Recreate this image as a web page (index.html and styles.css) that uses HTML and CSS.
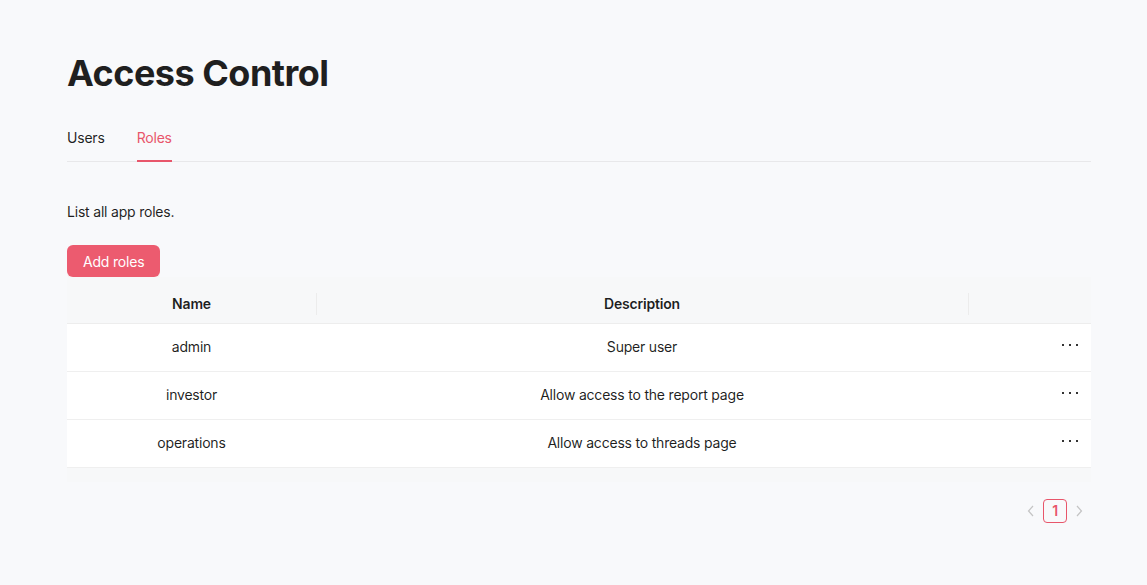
FILE: index.html
```html
<!DOCTYPE html>
<html lang="en">
  <head>
    <meta charset="UTF-8" />
    <meta name="viewport" content="width=device-width, initial-scale=1.0" />
    <title>Access Control</title>
    <link rel="stylesheet" href="styles.css">
  </head>
  <body>
    <div class="page">
      <h1 class="page-title">Access Control</h1>

      <div class="tabs">
        <div class="tab">Users</div>
        <div class="tab tab-active">Roles</div>
      </div>

      <p class="intro">List all app roles.</p>

      <button class="btn-primary">Add roles</button>

      <div class="table-wrap">
        <table class="roles-table">
          <thead>
            <tr>
              <th class="col-name">Name</th>
              <th class="col-desc">Description</th>
              <th class="col-actions"></th>
            </tr>
          </thead>
          <tbody>
            <tr>
              <td>admin</td>
              <td>Super user</td>
              <td class="cell-actions">
                <svg class="more" width="16" height="16" viewBox="0 0 16 16"><rect x="0" y="6" width="2" height="2" /><rect x="7" y="6" width="2" height="2" /><rect x="14" y="6" width="2" height="2" /></svg>
              </td>
            </tr>
            <tr>
              <td>investor</td>
              <td>Allow access to the report page</td>
              <td class="cell-actions">
                <svg class="more" width="16" height="16" viewBox="0 0 16 16"><rect x="0" y="6" width="2" height="2" /><rect x="7" y="6" width="2" height="2" /><rect x="14" y="6" width="2" height="2" /></svg>
              </td>
            </tr>
            <tr>
              <td>operations</td>
              <td>Allow access to threads page</td>
              <td class="cell-actions">
                <svg class="more" width="16" height="16" viewBox="0 0 16 16"><rect x="0" y="6" width="2" height="2" /><rect x="7" y="6" width="2" height="2" /><rect x="14" y="6" width="2" height="2" /></svg>
              </td>
            </tr>
          </tbody>
        </table>
        <div class="table-foot"></div>
      </div>

      <div class="pagination">
        <span class="page-arrow">
          <svg width="8" height="12" viewBox="0 0 8 12"><path d="M6 1 L1.5 6 L6 11" fill="none" stroke="currentColor" stroke-width="1.2" /></svg>
        </span>
        <span class="page-item page-current">1</span>
        <span class="page-arrow">
          <svg width="8" height="12" viewBox="0 0 8 12"><path d="M2 1 L6.5 6 L2 11" fill="none" stroke="currentColor" stroke-width="1.2" /></svg>
        </span>
      </div>
    </div>
  </body>
</html>
```

FILE: styles.css
```css
body {
  margin: 0;
  background-color: #f8f9fb;
  color: rgba(0, 0, 0, 0.88);
  font-family: Inter, "Noto Sans", sans-serif;
  font-size: 14px;
  line-height: 22px;
  letter-spacing: -0.2px;
}
.page {
  padding: 51px 56px 40px 67px;
}
.page-title {
  margin: 0 0 20px;
  font-size: 36px;
  line-height: 44px;
  font-weight: 700;
  letter-spacing: -0.5px;
  color: #1f1f1f;
}
.tabs {
  display: flex;
  gap: 32px;
  border-bottom: 1px solid #e8e8ea;
}
.tab {
  padding: 12px 0 11px;
  border-bottom: 2px solid transparent;
  margin-bottom: -1px;
  color: rgba(0, 0, 0, 0.88);
}
.tab-active {
  color: #e8566b;
  border-bottom-color: #e8566b;
}
.intro {
  margin: 39px 0 22px;
}
.btn-primary {
  display: block;
  height: 32px;
  padding: 0 16px;
  border: none;
  border-radius: 6px;
  background-color: #ec5b6f;
  color: #fff;
  font-family: inherit;
  font-size: 14px;
  letter-spacing: -0.2px;
  box-shadow: 0 2px 0 rgba(255, 38, 5, 0.06);
}
.table-wrap {
  background-color: #f7f8f9;
}
.roles-table {
  width: 100%;
  border-collapse: collapse;
  table-layout: fixed;
}
.roles-table th {
  position: relative;
  padding: 16px 12px 8px;
  text-align: center;
  font-weight: 600;
  color: rgba(0, 0, 0, 0.88);
  border-bottom: 1px solid #ededed;
}
.roles-table th + th::before {
  content: "";
  position: absolute;
  left: 0;
  top: 16px;
  width: 1px;
  height: 22px;
  background-color: #ececec;
}
.col-name {
  width: 225px;
}
.col-actions {
  width: 99px;
}
.roles-table td {
  padding: 12px 12px 13px;
  text-align: center;
  background-color: #fff;
  border-bottom: 1px solid #efefef;
}
.roles-table td.cell-actions {
  text-align: right;
  padding: 14px 13px 11px;
}
.more {
  display: inline-block;
  vertical-align: top;
  fill: #333;
}
.table-foot {
  height: 14px;
}
.pagination {
  display: flex;
  justify-content: flex-end;
  align-items: center;
  margin-top: 17px;
}
.page-arrow {
  display: flex;
  align-items: center;
  justify-content: center;
  width: 24px;
  height: 24px;
  color: #c4c4c4;
}
.page-item {
  display: flex;
  align-items: center;
  justify-content: center;
  box-sizing: border-box;
  width: 24px;
  height: 24px;
  border-radius: 4px;
  font-weight: 600;
}
.page-current {
  border: 1px solid #e8566b;
  color: #e8566b;
}
```
